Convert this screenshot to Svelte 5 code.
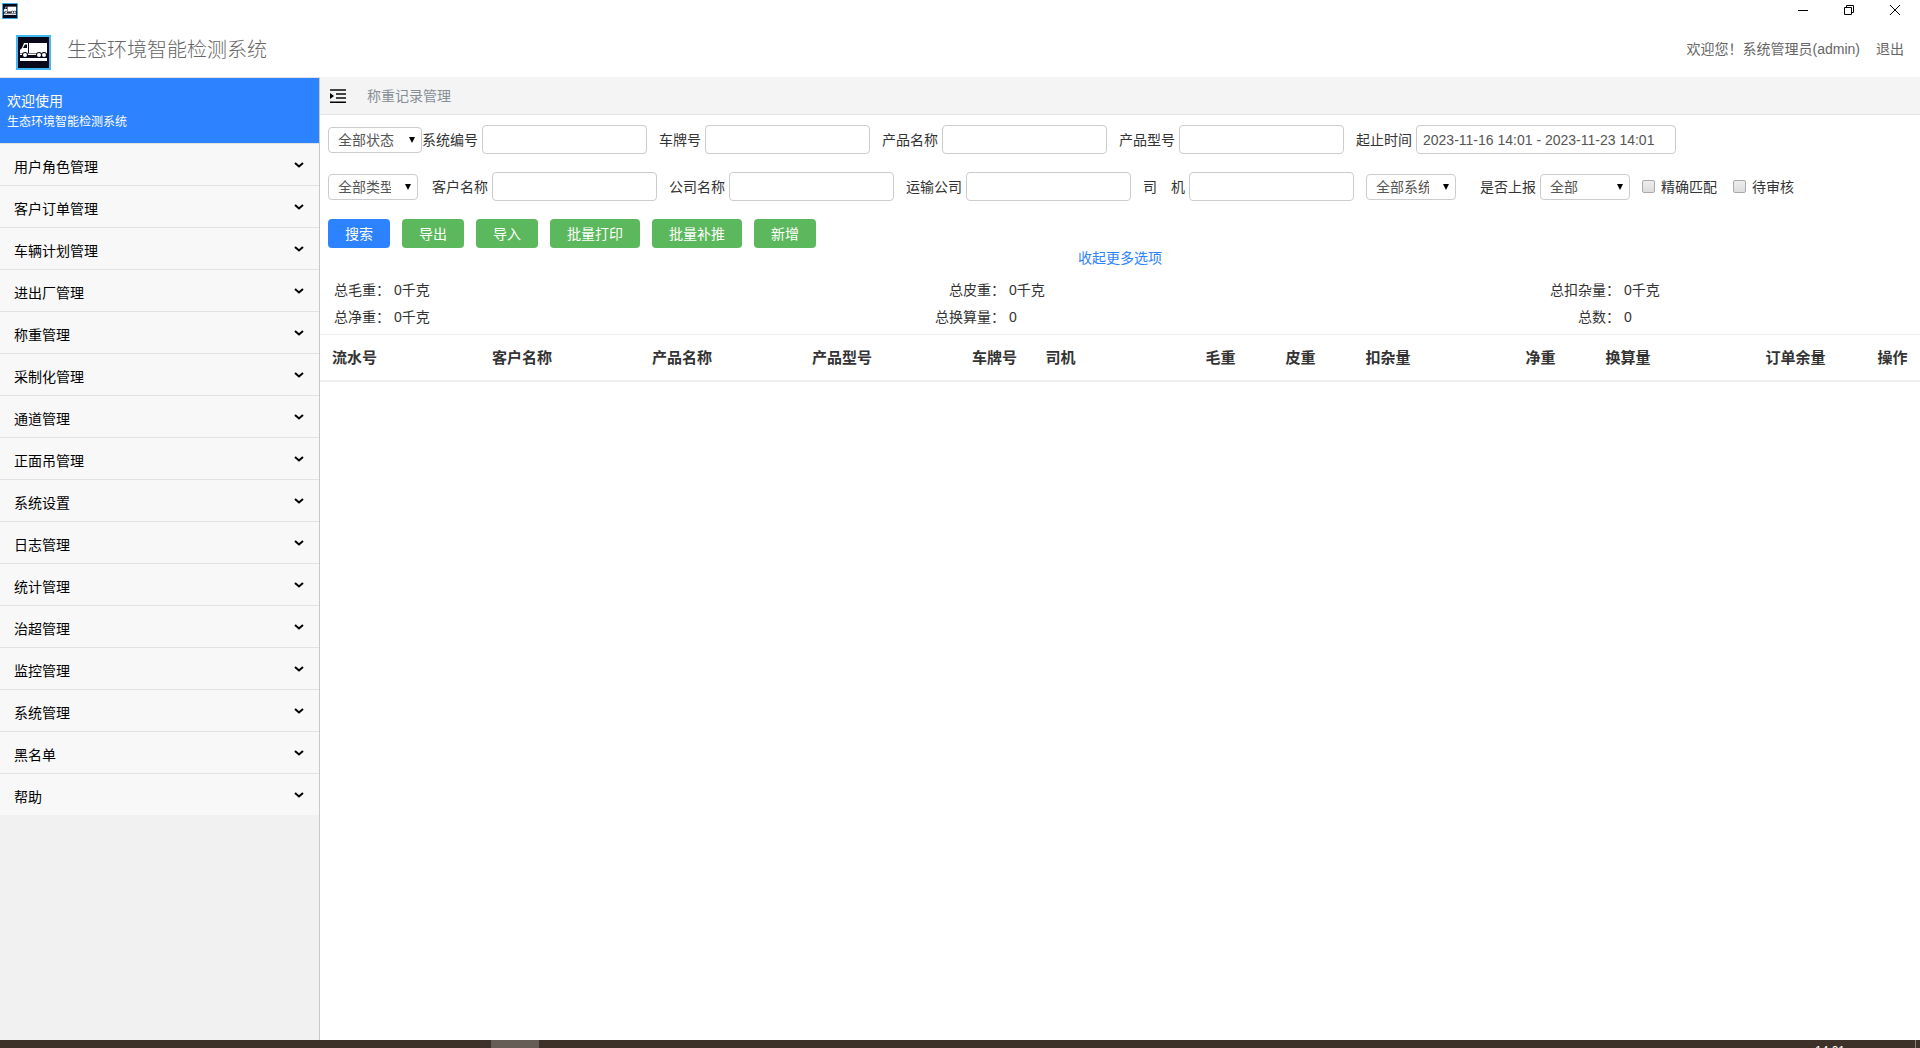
<script>
  const menus = [
    '用户角色管理', '客户订单管理', '车辆计划管理', '进出厂管理',
    '称重管理', '采制化管理', '通道管理', '正面吊管理',
    '系统设置', '日志管理', '统计管理', '治超管理',
    '监控管理', '系统管理', '黑名单', '帮助'
  ];

  const columns = [
    { title: '流水号', width: 10 },
    { title: '客户名称', width: 10 },
    { title: '产品名称', width: 10 },
    { title: '产品型号', width: 10 },
    { title: '车牌号', width: 4.6 },
    { title: '司机', width: 10 },
    { title: '毛重', width: 5 },
    { title: '皮重', width: 5 },
    { title: '扣杂量', width: 10 },
    { title: '净重', width: 5 },
    { title: '换算量', width: 10 },
    { title: '订单余量', width: 7 },
    { title: '操作', width: 3.4 }
  ];

  const totals = [
    ['总毛重', '0千克'], ['总皮重', '0千克'], ['总扣杂量', '0千克'],
    ['总净重', '0千克'], ['总换算量', '0'], ['总数', '0']
  ];

  const actions = ['导出', '导入', '批量打印', '批量补推', '新增'];

  let collapsed = false;
  let showMore = true;
  let period = '2023-11-16 14:01 - 2023-11-23 14:01';
</script>

{#snippet truck()}
  <svg class="truck" viewBox="0 0 35 35" aria-hidden="true">
    <rect width="35" height="35" fill="#3fb8f5" />
    <rect x="2" y="2" width="31" height="31" fill="#080818" />
    <rect x="13" y="8" width="18" height="10" fill="#fff" />
    <path d="M4 20V15L6 13L8 8H12V20Z" fill="#fff" />
    <path d="M7 13L9 9.500H11V13Z" fill="#080818" />
    <rect x="4" y="18" width="27" height="1" fill="#777" />
    <rect x="4" y="19" width="27" height="1" fill="#fff" />
    <circle cx="9" cy="20" r="3" fill="#080818" />
    <circle cx="23" cy="20" r="3" fill="#080818" />
    <circle cx="28" cy="20" r="3" fill="#080818" />
    <circle cx="9" cy="20" r="2" fill="#fff" />
    <circle cx="23" cy="20" r="2" fill="#fff" />
    <circle cx="28" cy="20" r="2" fill="#fff" />
    <rect x="4" y="23" width="27" height="3" fill="#fff" />
  </svg>
{/snippet}

<div class="window">
  <div class="titlebar">
    <span class="app-icon">{@render truck()}</span>
    <div class="controls">
      <button aria-label="最小化">
        <svg viewBox="0 0 12 12"><path d="M1 6.5H11" /></svg>
      </button>
      <button aria-label="还原">
        <svg viewBox="0 0 12 12"><path d="M1.5 3.5H8.500V10.500H1.500ZM3.500 3V1.500H10.500V8.500H9" /></svg>
      </button>
      <button aria-label="关闭">
        <svg viewBox="0 0 12 12"><path d="M1 1L11 11M11 1L1 11" /></svg>
      </button>
    </div>
  </div>

  <header>
    <span class="logo">{@render truck()}</span>
    <h1>生态环境智能检测系统</h1>
    <span class="user">欢迎您！系统管理员(admin)</span>
    <a class="logout" href="#logout">退出</a>
  </header>

  <div class="body">
    {#if !collapsed}
      <nav>
        <div class="welcome">
          <p>欢迎使用</p>
          <small>生态环境智能检测系统</small>
        </div>
        <ul>
          {#each menus as menu}
            <li>
              <button class="menu">
                <span>{menu}</span>
                <svg viewBox="0 0 10 6"><path d="M1 1L5 4.500L9 1" /></svg>
              </button>
            </li>
          {/each}
        </ul>
      </nav>
    {/if}

    <main>
      <div class="crumb">
        <button aria-label="收起菜单" on:click={() => (collapsed = !collapsed)}>
          <svg viewBox="0 0 16 14">
            <path fill="#444" d="M0 0H16V2H0ZM6 4H16V6H6ZM6 8H16V10H6Z" />
            <path fill="#000" d="M0 12.500H16V14H0ZM0 4L4 7L0 10Z" />
          </svg>
        </button>
        <span>称重记录管理</span>
      </div>

      <div class="row">
        <select class="wide" aria-label="状态"><option>全部状态</option></select>
        <label class="field tight">系统编号<input type="text" /></label>
        <label class="field">车牌号<input type="text" /></label>
        <label class="field">产品名称<input type="text" /></label>
        <label class="field">产品型号<input type="text" /></label>
        <label class="field">起止时间<input class="period" type="text" bind:value={period} /></label>
      </div>

      {#if showMore}
        <div class="row">
          <select class="type" aria-label="类型"><option>全部类型</option></select>
          <label class="field">客户名称<input type="text" /></label>
          <label class="field">公司名称<input type="text" /></label>
          <label class="field">运输公司<input type="text" /></label>
          <label class="field">司　机<input type="text" /></label>
          <select class="system" aria-label="系统"><option>全部系统</option></select>
          <label class="field report">是否上报<select><option>全部</option></select></label>
          <label class="check"><input type="checkbox" />精确匹配</label>
          <label class="check"><input type="checkbox" />待审核</label>
        </div>
      {/if}

      <div class="actions">
        <button class="search">搜索</button>
        {#each actions as action}
          <button>{action}</button>
        {/each}
      </div>

      <a class="more" href="#more" on:click|preventDefault={() => (showMore = !showMore)}>
        {showMore ? '收起更多选项' : '展开更多选项'}
      </a>

      <dl>
        {#each totals as [name, value]}
          <dt>{name}：</dt>
          <dd>{value}</dd>
        {/each}
      </dl>

      <table>
        <thead>
          <tr>
            {#each columns as column}
              <th style="width: {column.width}%">{column.title}</th>
            {/each}
          </tr>
        </thead>
        <tbody></tbody>
      </table>
    </main>
  </div>

  <footer>
    <span class="task"></span>
    <span class="clock">14:01</span>
    <span class="desktop"></span>
  </footer>
</div>

<style>
  :global(body) {
    margin: 0;
    background: #fff;
  }

  .window {
    display: flex;
    flex-direction: column;
    height: 100vh;
    overflow: hidden;
    font-family: "Liberation Sans", "Noto Sans CJK SC", sans-serif;
    font-size: 14px;
    line-height: 20px;
    color: #333;
  }

  button,
  input,
  select {
    box-sizing: border-box;
    margin: 0;
    font: inherit;
  }

  button {
    padding: 0;
    border: none;
    background: none;
    cursor: pointer;
  }

  svg {
    display: block;
  }

  ul,
  dl,
  dd,
  h1,
  p {
    margin: 0;
    padding: 0;
  }

  .titlebar {
    display: flex;
    justify-content: space-between;
    height: 22px;
    flex: none;
  }

  .app-icon {
    width: 16px;
    padding: 3px 2px;
  }

  .controls {
    display: flex;
  }

  .controls button {
    width: 46px;
    height: 20px;
    padding-right: 4px;
  }

  .controls svg {
    width: 12px;
    margin: 0 auto;
    fill: none;
    stroke: #000;
  }

  header {
    display: flex;
    align-items: center;
    height: 55px;
    flex: none;
    padding: 0 16px;
    box-sizing: border-box;
    color: #666;
  }

  .logo {
    width: 35px;
    padding-top: 6px;
  }

  h1 {
    flex: 1;
    margin-left: 16px;
    font-size: 20px;
    font-weight: 300;
  }

  .user,
  .logout {
    padding-bottom: 2px;
  }

  .logout {
    margin-left: 16px;
    color: #666;
    text-decoration: none;
  }

  .body {
    display: flex;
    flex: 1;
    min-height: 0;
  }

  nav {
    width: 320px;
    flex: none;
    box-sizing: border-box;
    border-top: 1px solid #e2e2e2;
    border-right: 1px solid #c8c8c8;
    background: #f1f1f1;
    overflow: hidden;
  }

  .welcome {
    height: 65px;
    box-sizing: border-box;
    padding: 13px 7px 0;
    background: #2d82ff;
    color: #fff;
  }

  .welcome small {
    display: block;
    font-size: 12px;
    line-height: 22px;
  }

  nav ul {
    list-style: none;
  }

  li {
    border-top: 1px solid #e2e2e2;
    background: #f8f8f8;
  }

  .menu {
    display: flex;
    align-items: center;
    justify-content: space-between;
    width: 100%;
    height: 41px;
    padding: 0 15px 0 14px;
    color: #000;
  }

  .menu span {
    padding-top: 4px;
  }

  .menu svg {
    width: 10px;
    fill: none;
    stroke: #000;
    stroke-width: 2;
  }

  main {
    flex: 1;
    min-width: 0;
  }

  .crumb {
    display: flex;
    align-items: center;
    height: 37px;
    padding-left: 10px;
    border-bottom: 1px solid #e2e2e2;
    background: #f4f4f4;
    color: #868e96;
  }

  .crumb svg {
    width: 16px;
  }

  .crumb span {
    margin-left: 21px;
  }

  .row {
    display: flex;
    align-items: center;
    margin-top: 10px;
    padding-left: 8px;
    white-space: nowrap;
  }

  .row + .row {
    margin-top: 18px;
  }

  .field {
    display: flex;
    align-items: center;
    margin-left: 12px;
  }

  .field.tight {
    margin-left: 0;
  }

  .field input,
  .field select {
    margin-left: 4px;
  }

  input[type='text'] {
    width: 165px;
    height: 29px;
    padding: 0 6px;
    border: 1px solid #ccc;
    border-radius: 4px;
    background: #fff;
    color: #555;
  }

  input.period {
    width: 260px;
  }

  select {
    width: 90px;
    height: 26px;
    padding: 0 26px 0 9px;
    border: 1px solid #ccc;
    border-radius: 4px;
    appearance: none;
    background: #fff url("data:image/svg+xml,%3Csvg xmlns='http://www.w3.org/2000/svg' viewBox='0 0 6 6'%3E%3Cpath d='M0 0H6L3 6Z'/%3E%3C/svg%3E") no-repeat right 6px center / 6px 6px;
    color: #555;
  }

  select.wide {
    width: 94px;
  }

  select.type {
    margin-right: 2px;
  }

  select.system {
    margin-left: 12px;
  }

  .report {
    margin-left: 24px;
  }

  .check {
    display: flex;
    align-items: center;
    margin-left: 12px;
  }

  .check + .check {
    margin-left: 16px;
  }

  .check input {
    width: 13px;
    height: 13px;
    margin-right: 6px;
    border: 1px solid #aaa;
    border-radius: 2px;
    appearance: none;
    background: linear-gradient(#eee, #ddd);
  }

  .check input:checked {
    background: #2d82ff;
  }

  .actions {
    display: flex;
    gap: 12px;
    margin-top: 18px;
    padding-left: 8px;
  }

  .actions button {
    height: 29px;
    padding: 0 17px;
    border-radius: 4px;
    background: #5cb85c;
    color: #fff;
  }

  .actions .search {
    background: #2d82ff;
  }

  .more {
    display: block;
    width: 84px;
    margin: 0 auto;
    color: #2d82ff;
    text-decoration: none;
    white-space: nowrap;
  }

  dl {
    display: grid;
    grid-template-columns: 74px 541fr 74px 541fr 74px 296fr;
    margin: 9px 0 3px;
    line-height: 27px;
  }

  dt {
    display: flex;
    justify-content: flex-end;
    padding-right: 4px;
    white-space: nowrap;
  }

  table {
    width: 100%;
    table-layout: fixed;
    border-collapse: separate;
    border-spacing: 0;
  }

  th {
    box-sizing: border-box;
    height: 48px;
    padding: 0 0 0 12px;
    border-top: 1px solid #eee;
    border-bottom: 2px solid #eee;
    font-size: 15px;
    font-weight: 700;
    text-align: left;
    white-space: nowrap;
  }

  footer {
    display: flex;
    height: 8px;
    flex: none;
    overflow: hidden;
    background: #3d3129;
    color: #fff;
    font-size: 12px;
  }

  .task {
    width: 48px;
    margin-left: 491px;
    background: #665d57;
  }

  .clock {
    margin-left: auto;
    padding-top: 1px;
  }

  .desktop {
    width: 4px;
    margin-left: 70px;
    border-left: 1px solid #8a827c;
  }
</style>
